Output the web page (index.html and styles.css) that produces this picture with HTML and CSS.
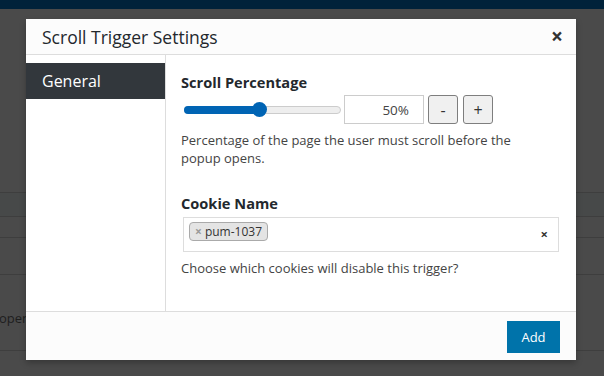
FILE: index.html
```html
<!DOCTYPE html>
<html lang="en">
<head>
    <meta charset="UTF-8">
    <meta name="viewport" content="width=device-width, initial-scale=1.0">
    <title>Scroll Trigger Settings</title>
    <link rel="stylesheet" href="styles.css">
</head>
<body>
    <div class="page">
        <div class="topbar"></div>
        <div class="rows">
            <div class="row row-top"></div>
            <div class="row row-a"></div>
            <div class="row row-b"></div>
            <div class="row row-c"></div>
            <div class="row row-d"><span class="row-text">open</span></div>
            <div class="row row-e"></div>
        </div>
    </div>

    <div class="modal">
        <div class="modal-header">
            <h2 class="modal-title">Scroll Trigger Settings</h2>
            <span class="modal-close">&times;</span>
        </div>
        <div class="modal-body">
            <div class="tabs">
                <div class="tab active">General</div>
            </div>
            <div class="tab-content">
                <div class="field-label">Scroll Percentage</div>
                <div class="range-row">
                    <div class="slider">
                        <div class="slider-fill" style="width: 48%;"></div>
                        <div class="slider-thumb" style="left: 48%;"></div>
                    </div>
                    <input class="range-value" type="text" value="50%">
                    <button class="range-btn">-</button>
                    <button class="range-btn plus">+</button>
                </div>
                <p class="desc">Percentage of the page the user must scroll before the popup opens.</p>

                <div class="field-label cookie-label">Cookie Name</div>
                <div class="select-box">
                    <span class="tag"><span class="tag-x">&times;</span>pum-1037</span>
                    <span class="select-clear">&times;</span>
                </div>
                <p class="desc choose">Choose which cookies will disable this trigger?</p>
            </div>
        </div>
        <div class="modal-footer">
            <button class="btn-add">Add</button>
        </div>
    </div>
</body>
</html>
```

FILE: styles.css
```css
body {
    margin: 0;
    background-color: #4a4a4a;
    font-family: "Open Sans", "Noto Sans", sans-serif;
    color: #444;
    overflow: hidden;
}
.page {
    height: 376px;
}
.topbar {
    height: 9px;
    background-color: #00223a;
}
.row {
    border-bottom: 1px solid #3e3e3e;
}
.row-top {
    height: 183px;
}
.row-a {
    height: 23px;
    background-color: #474949;
}
.row-b {
    height: 20px;
}
.row-c {
    height: 36px;
}
.row-d {
    height: 75px;
    display: flex;
    align-items: center;
}
.row-text {
    font-size: 13px;
    color: #1e1e1e;
    margin-left: -1px;
    margin-top: 10px;
}
.row-e {
    height: 24px;
    border-bottom: none;
}

/* modal */
.modal {
    position: absolute;
    left: 26px;
    top: 19px;
    width: 550px;
    height: 341px;
    background-color: #fff;
    box-shadow: 0 3px 6px rgba(0, 0, 0, 0.25);
    display: flex;
    flex-direction: column;
}
.modal-header {
    height: 35px;
    background-color: #fcfcfc;
    border-bottom: 1px solid #ddd;
    display: flex;
    align-items: center;
    justify-content: space-between;
    padding: 0 13px 0 16px;
}
.modal-title {
    margin: 0;
    font-size: 17.5px;
    font-weight: 400;
    color: #23282d;
}
.modal-close {
    font-size: 21px;
    font-weight: 700;
    color: #333;
    line-height: 1;
}
.modal-body {
    flex: 1;
    display: flex;
}
.tabs {
    width: 139px;
    border-right: 1px solid #ddd;
    padding-top: 8px;
}
.tab {
    height: 36px;
    line-height: 36px;
    padding-left: 16px;
    font-size: 16px;
}
.tab.active {
    background-color: #32373c;
    color: #fff;
}
.tab-content {
    flex: 1;
    padding: 17px 16px 0 15px;
}
.field-label {
    font-size: 14.6px;
    font-weight: 700;
    line-height: 20px;
    color: #23282d;
}
.range-row {
    display: flex;
    align-items: center;
    margin-top: 3px;
    height: 29px;
    padding-left: 3px;
}
.slider {
    position: relative;
    width: 155px;
    height: 6px;
    background-color: #eee;
    border: 1px solid #ccc;
    border-radius: 4px;
}
.slider-fill {
    height: 100%;
    background-color: #0064b4;
    border-radius: 4px 0 0 4px;
    margin: -1px 0 0 -1px;
    padding: 1px 0 1px 1px;
}
.slider-thumb {
    position: absolute;
    top: -5px;
    width: 15px;
    height: 15px;
    margin-left: -7px;
    border-radius: 50%;
    background-color: #0064b4;
}
.range-value {
    width: 80px;
    height: 29px;
    box-sizing: border-box;
    margin-left: 3px;
    border: 1px solid #ccc;
    padding: 0 14px 0 0;
    text-align: right;
    font-family: inherit;
    font-size: 13.5px;
    color: #444;
}
.range-btn {
    width: 30px;
    height: 29px;
    margin-left: 4px;
    border: 1px solid #7e7e7e;
    border-radius: 3px;
    background-color: #f0f0f0;
    font-family: inherit;
    font-size: 16px;
    color: #333;
    padding: 0;
}
.range-btn.plus {
    margin-left: 5px;
}
.desc {
    margin: 7px 0 0;
    max-width: 360px;
    font-size: 13px;
    line-height: 18px;
    color: #444;
}
.cookie-label {
    margin-top: 26px;
}
.select-box {
    margin: 4px 0 0 2px;
    width: 376px;
    height: 35px;
    box-sizing: border-box;
    border: 1px solid #ddd;
    display: flex;
    align-items: flex-start;
    justify-content: space-between;
    padding: 4px 10px 0 5px;
}
.tag {
    height: 19px;
    box-sizing: border-box;
    border: 1px solid #aaa;
    border-radius: 4px;
    background-color: #e4e4e4;
    font-size: 12px;
    line-height: 17px;
    color: #333;
    padding: 0 5px;
}
.tag-x {
    color: #999;
    font-weight: 700;
    margin-right: 3px;
}
.select-clear {
    font-size: 13px;
    font-weight: 700;
    color: #333;
    line-height: 24px;
}
.modal-footer {
    height: 49px;
    box-sizing: border-box;
    background-color: #fcfcfc;
    border-top: 1px solid #ddd;
    display: flex;
    justify-content: flex-end;
    padding: 9px 16px 0 0;
}
.btn-add {
    width: 53px;
    height: 32px;
    border: none;
    background-color: #0073aa;
    color: #fff;
    font-family: inherit;
    font-size: 13px;
}
```
